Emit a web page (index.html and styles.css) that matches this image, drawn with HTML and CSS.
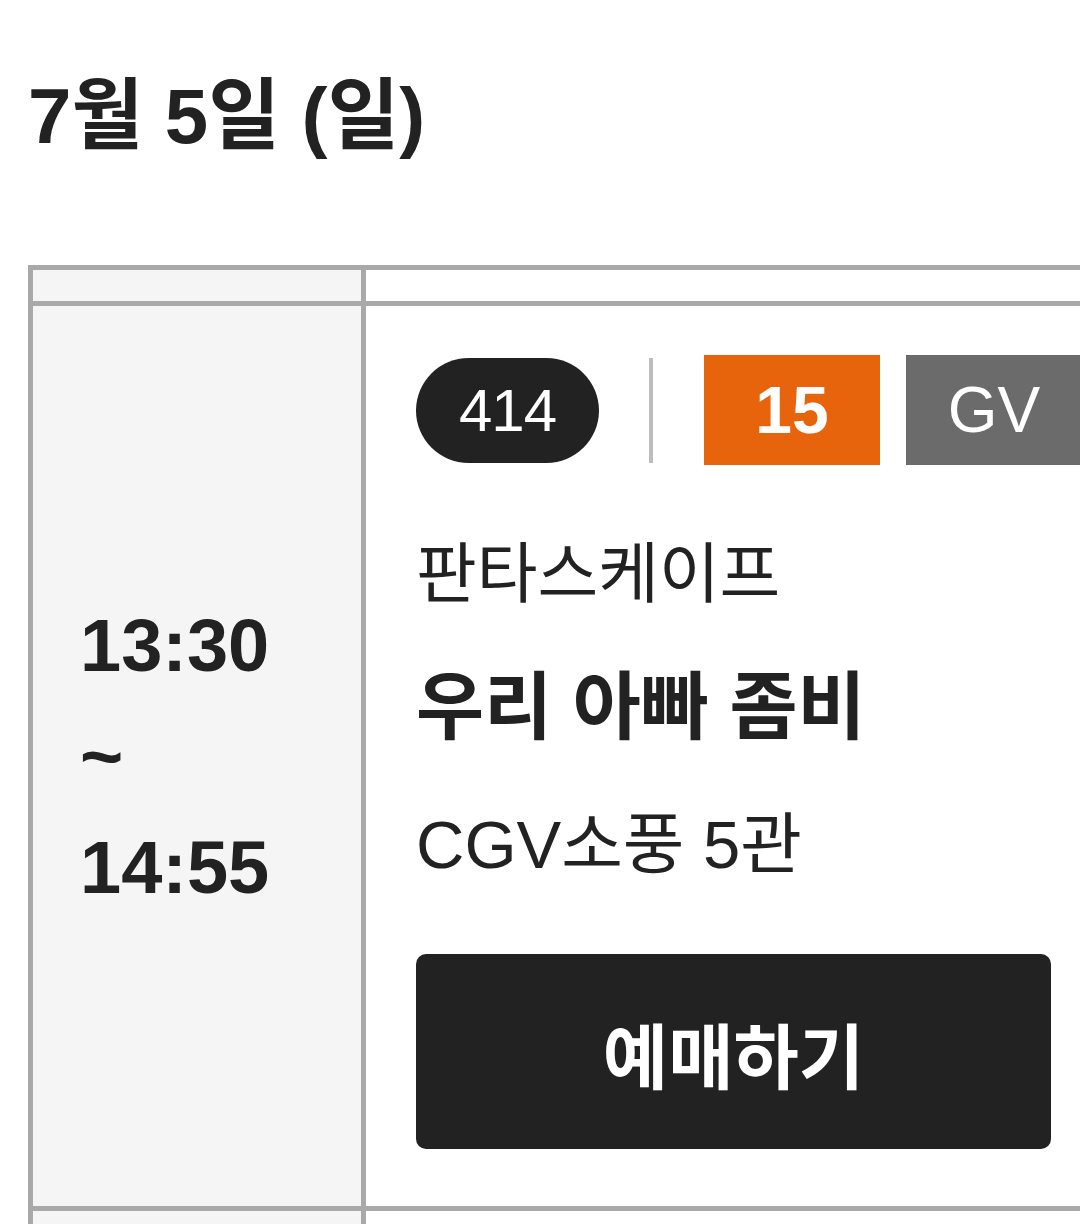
FILE: index.html
```html
<!DOCTYPE html>
<html lang="ko">
<head>
<meta charset="utf-8">
<title>상영 시간표</title>
<link rel="stylesheet" href="styles.css">
</head>
<body>
<h1 class="date">7월 5일 (일)</h1>
<table class="schedule">
  <tr class="head-row">
    <th class="col-time"></th>
    <th class="col-info"></th>
  </tr>
  <tr>
    <td class="col-time time-cell">
      <div class="time">13:30</div>
      <div class="time">~</div>
      <div class="time">14:55</div>
    </td>
    <td class="col-info info-cell">
      <div class="badges">
        <span class="pill">414</span>
        <span class="sep"></span>
        <span class="tag tag-age">15</span>
        <span class="tag tag-gv">GV</span>
      </div>
      <div class="sub">판타스케이프</div>
      <div class="title">우리 아빠 좀비</div>
      <div class="theater">CGV소풍 5관</div>
      <button class="book" type="button">예매하기</button>
    </td>
  </tr>
  <tr class="next-row">
    <td class="col-time"></td>
    <td class="col-info"></td>
  </tr>
</table>
</body>
</html>
```

FILE: styles.css
```css
html, body {
  margin: 0;
  padding: 0;
  overflow: hidden;
  background: #ffffff;
}

body {
  width: 1080px;
  height: 1224px;
  font-family: "Liberation Sans", "Noto Sans CJK KR", sans-serif;
  color: #222222;
}

.date {
  margin: 71px 0 104px 28px;
  font-size: 78px;
  line-height: 90px;
  font-weight: 700;
  white-space: nowrap;
}

.schedule {
  margin-left: 28px;
  width: 1200px;
  border-collapse: separate;
  border-spacing: 0;
  border-top: 5px solid #a9a9a9;
  border-left: 5px solid #a9a9a9;
}

.schedule th,
.schedule td {
  padding: 0;
  border-right: 5px solid #a9a9a9;
  border-bottom: 5px solid #a9a9a9;
}

.col-time {
  width: 328px;
  background: #f5f5f5;
}

.col-info {
  background: #ffffff;
}

.head-row th {
  height: 31px;
}

.time-cell {
  vertical-align: middle;
  padding-left: 47px !important;
  box-sizing: border-box;
}

.time {
  font-size: 74px;
  line-height: 111px;
  font-weight: 700;
  white-space: nowrap;
}

.info-cell {
  vertical-align: top;
  padding: 49px 0 57px 50px !important;
}

.badges {
  display: flex;
  align-items: center;
  height: 110px;
}

.pill {
  display: flex;
  align-items: center;
  justify-content: center;
  width: 183px;
  height: 105px;
  border-radius: 53px;
  background: #222222;
  color: #ffffff;
  font-size: 60px;
  letter-spacing: -1px;
}

.sep {
  width: 4px;
  height: 105px;
  margin: 0 51px 0 50px;
  background: #bdbdbd;
}

.tag {
  display: flex;
  align-items: center;
  justify-content: center;
  width: 176px;
  height: 110px;
  flex: none;
  color: #ffffff;
}

.tag-age {
  background: #e8640c;
  font-size: 66px;
  font-weight: 700;
}

.tag-gv {
  margin-left: 26px;
  background: #6b6b6b;
  font-size: 64px;
}

.sub {
  margin-top: 69px;
  font-size: 66px;
  line-height: 80px;
  white-space: nowrap;
}

.title {
  margin-top: 54px;
  font-size: 74px;
  line-height: 80px;
  font-weight: 700;
  white-space: nowrap;
}

.theater {
  margin-top: 57px;
  font-size: 67px;
  line-height: 80px;
  white-space: nowrap;
}

.book {
  display: flex;
  align-items: center;
  justify-content: center;
  margin-top: 69px;
  width: 635px;
  height: 195px;
  padding: 0;
  border: none;
  border-radius: 10px;
  background: #222222;
  color: #ffffff;
  font-family: "Liberation Sans", "Noto Sans CJK KR", sans-serif;
  font-size: 71px;
  font-weight: 700;
}

.next-row td {
  height: 200px;
}
```
